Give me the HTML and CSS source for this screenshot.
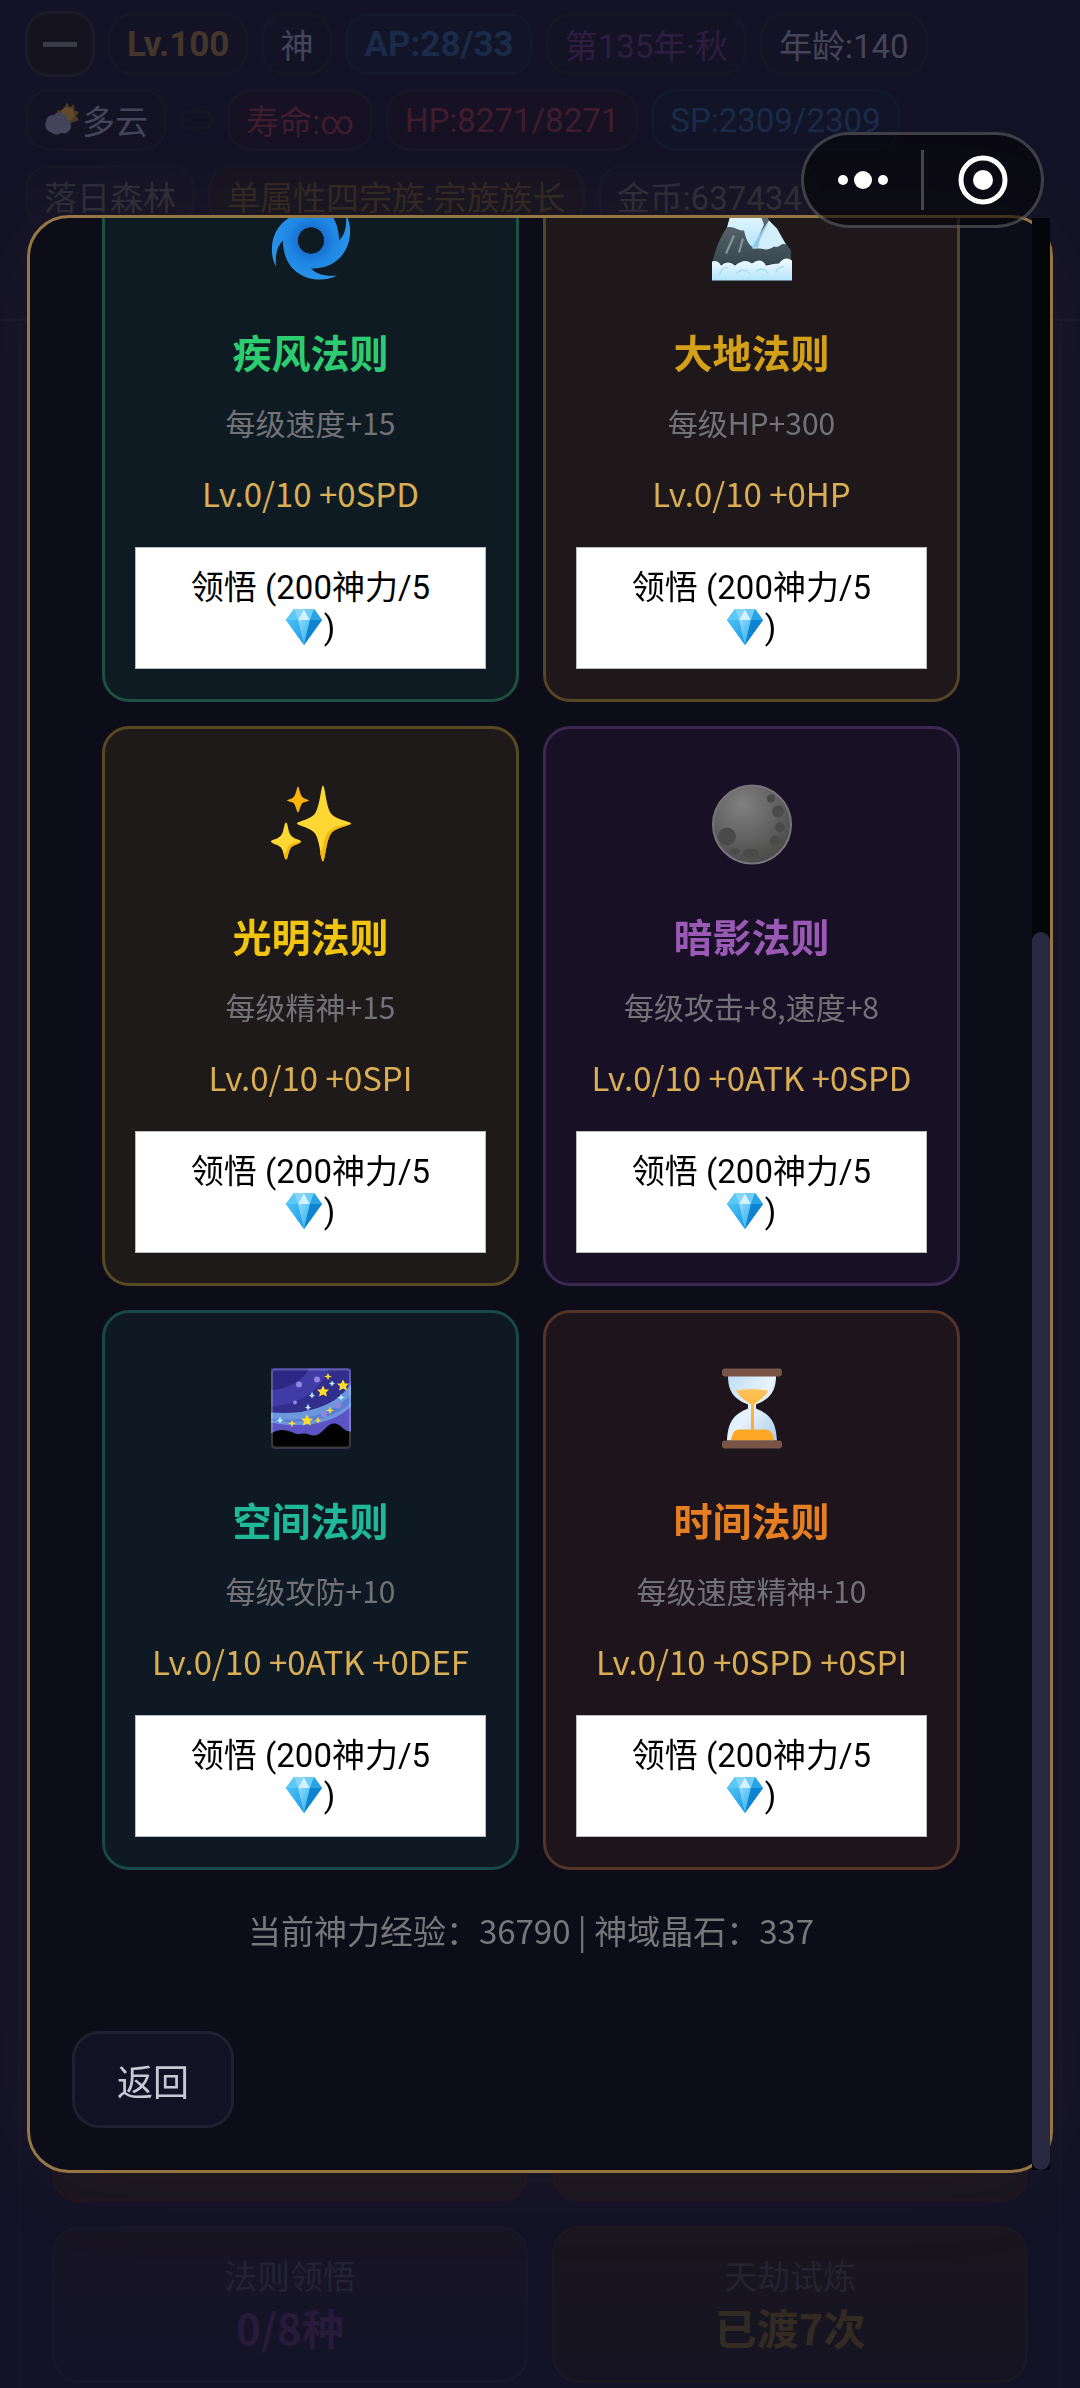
FILE: index.html
```html
<!DOCTYPE html>
<html lang="zh-CN">
<head>
<meta charset="utf-8">
<meta name="viewport" content="width=device-width, initial-scale=1">
<title>法则领悟</title>
<link rel="stylesheet" href="styles.css">
</head>
<body>
<svg class="sprite" aria-hidden="true">
  <defs>
    <linearGradient id="gem-left" x1="0" y1="0" x2="1" y2="1"><stop offset="0" stop-color="#4fc3f7"/><stop offset="1" stop-color="#1e9be6"/></linearGradient>
    <linearGradient id="gem-mid" x1="0" y1="0" x2="1" y2="1"><stop offset="0" stop-color="#8fdcfc"/><stop offset="1" stop-color="#29abed"/></linearGradient>
    <radialGradient id="wind-fill" cx="0" cy="0" r="40" gradientUnits="userSpaceOnUse"><stop offset=".3" stop-color="#1a6fd0"/><stop offset=".6" stop-color="#1e88e5"/><stop offset="1" stop-color="#2a93ea"/></radialGradient>
    <linearGradient id="rock" x1="0" y1="0" x2="0" y2="1"><stop offset="0" stop-color="#66747b"/><stop offset="1" stop-color="#37474f"/></linearGradient>
    <linearGradient id="snow" x1="0" y1="0" x2="0" y2="1"><stop offset="0" stop-color="#f4fbff"/><stop offset="1" stop-color="#b3e5fc"/></linearGradient>
    <radialGradient id="moon" cx=".38" cy=".25" r=".8"><stop offset="0" stop-color="#808080"/><stop offset=".6" stop-color="#5f5f5f"/><stop offset="1" stop-color="#484846"/></radialGradient>
    <linearGradient id="glass" x1="0" y1="0" x2="1" y2="1"><stop offset="0" stop-color="#bfdcf5"/><stop offset=".5" stop-color="#e8f3fc"/><stop offset="1" stop-color="#aaccea"/></linearGradient>
    <linearGradient id="sand" x1="0" y1="0" x2="0" y2="1"><stop offset="0" stop-color="#ffc35a"/><stop offset="1" stop-color="#ffa726"/></linearGradient>
  </defs>
  <symbol id="gem" viewBox="0 0 36 36">
    <path d="M8 0h20l8 11-18 25L0 11z" fill="#29a6e8"/>
    <path d="M8 0 0 11h12z" fill="#5cc8f5"/><path d="M8 0h10l-6 11z" fill="#85d8fa"/>
    <path d="m18 0-6 11h12z" fill="#d3f1fe"/><path d="M18 0h10l-4 11z" fill="#6dcdf7"/>
    <path d="m28 0 8 11H24z" fill="#2ba4e6"/>
    <path d="M0 11h12l6 25z" fill="url(#gem-left)"/><path d="M12 11h12l-6 25z" fill="url(#gem-mid)"/><path d="M24 11h12L18 36z" fill="#0f83cf"/>
  </symbol>
</svg>

<div class="page">
  <header class="status">
    <div class="status-row">
      <button class="chip toggle" type="button" aria-label="收起"><span class="minus"></span></button>
      <span class="chip c-gold strong">Lv.100</span>
      <span class="chip">神</span>
      <span class="chip c-blue strong">AP:28/33</span>
      <span class="chip c-purple">第135年·秋</span>
      <span class="chip">年龄:140</span>
    </div>
    <div class="status-row">
      <span class="chip"><svg class="weather" viewBox="0 0 36 36" aria-hidden="true"><path d="m24 0 2 5 5-3v6l5 2-3 4 3 4-6 2-8 4-9-9 1-7 5 0z" fill="#4e3a24"/><circle cx="24" cy="12" r="7" fill="#61492a"/><path d="M8 31a8 8 0 0 1-6-11 7 7 0 0 1 8-7 8 8 0 0 1 14 4 8 8 0 0 1 1 13q-3 3-7 1-5 4-10 0z" fill="#43445a"/></svg>多云</span>
      <span class="chip blank"></span>
      <span class="chip c-red">寿命:∞</span>
      <span class="chip c-red">HP:8271/8271</span>
      <span class="chip c-blue">SP:2309/2309</span>
    </div>
    <div class="status-row dim">
      <span class="chip">落日森林</span>
      <span class="chip c-bronze">单属性四宗族·宗族族长</span>
      <span class="chip">金币:637434</span>
    </div>
  </header>
  <main class="realm">
    <div class="tiles">
      <div class="tile t-red"></div>
      <div class="tile t-red"></div>
      <div class="tile t-law"><span>法则领悟</span><strong class="n-purple">0/8种</strong></div>
      <div class="tile t-trial"><span>天劫试炼</span><strong class="n-gold">已渡7次</strong></div>
    </div>
  </main>
</div>

<div class="overlay">
  <section class="modal" role="dialog" aria-label="法则领悟">
    <div class="scroller">
      <div class="laws">
        <article class="law wind">
          <svg class="law-icon" viewBox="0 0 80 80" aria-hidden="true"><g transform="translate(40 40)" fill="url(#wind-fill)"><path fill-rule="evenodd" d="M-28 0a28 28 0 1 0 56 0a28 28 0 1 0-56 0zM-13 0a13 13 0 1 0 26 0a13 13 0 1 0-26 0z"/><path id="arm" d="M26 35C8 45-28 38-28 0L0 28C6 34 14 36 26 35z"/><use href="#arm" transform="rotate(90)"/><use href="#arm" transform="rotate(180)"/><use href="#arm" transform="rotate(270)"/><circle r="13" fill="#0f1b22"/></g></svg>
          <h2>疾风法则</h2><p class="desc">每级速度+15</p><p class="level">Lv.0/10 +0SPD</p>
          <button class="learn" type="button">领悟 (200神力/5<br><svg class="gem"><use href="#gem"/></svg>)</button>
        </article>
        <article class="law earth">
          <svg class="law-icon" viewBox="0 0 80 80" aria-hidden="true"><path d="M0 64C3 48 9 36 14 28L34 4l14 2 16 24 15 20v14z" fill="url(#rock)"/><path d="m15 27 3-11C24 14 28 10 30 4q8-6 15 2l7 18-8 18 0 6c-8-2-10-10-12-18-4 1-12-5-17-3z" fill="url(#snow)"/><path d="m57 20 8 8 9 16c-6-2-6 4-12 2-6 4-9 3-14 2l-8 0 7-13z" fill="#d3effb"/><path d="m57 21-9 18-2 8-6 0 7-12z" fill="#8fc9e8"/><path d="m22 35-8 18M31 38l-4 14" stroke="#8a979d" stroke-width="2"/><path d="M0 61q6-2 9 4 7-6 14 0 10-8 17-2 9-7 14 2 8-2 13-2 6-8 13-3v20H0z" fill="url(#snow)"/><path d="M8 74q0-7 8-7m8 6q8-7 14 0m6-2q8-6 12 2m8-1q0-5 8-6" fill="none" stroke="#8ed4f4"/></svg>
          <h2>大地法则</h2><p class="desc">每级HP+300</p><p class="level">Lv.0/10 +0HP</p>
          <button class="learn" type="button">领悟 (200神力/5<br><svg class="gem"><use href="#gem"/></svg>)</button>
        </article>
        <article class="law light">
          <svg class="law-icon" viewBox="0 0 80 80" aria-hidden="true"><path d="M52 1c2 0 3 21 8 28 4 6 20 8 20 10s-16 4-20 10c-5 7-6 28-8 28s-3-21-8-28c-4-6-18-8-18-10s14-4 18-10c5-7 6-28 8-28z" fill="#fdd835"/><path d="M80 39c0 2-16 4-20 10-5 7-6 28-8 28-1 0-2-4-3-9 5-6 3-14 8-20 6-7 14-7 23-9z" fill="#f4b70c"/><path d="M15 38c2 0 2 10 5 13 3 4 10 4 10 6s-7 3-10 6c-3 4-3 12-5 12s-2-8-5-12c-3-3-10-4-10-6s7-2 10-6c3-3 3-13 5-13z" fill="#fdd835"/><path d="M30 57c0 2-7 3-10 6-3 4-3 12-5 12l-2-5c4-3 2-6 5-9s7-3 12-4z" fill="#f4b70c"/><path d="M27 2c1 0 2 8 4 10 2 3 7 3 7 4s-5 1-7 3c-2 3-3 9-4 9s-2-6-4-9c-2-2-7-2-7-3s5-1 7-4c2-2 3-10 4-10z" fill="#fbb40b"/></svg>
          <h2>光明法则</h2><p class="desc">每级精神+15</p><p class="level">Lv.0/10 +0SPI</p>
          <button class="learn" type="button">领悟 (200神力/5<br><svg class="gem"><use href="#gem"/></svg>)</button>
        </article>
        <article class="law shadow">
          <svg class="law-icon" viewBox="0 0 80 80" aria-hidden="true"><circle cx="40" cy="40" r="39" fill="url(#moon)" stroke="#77757a" stroke-width="2"/><g fill="#4a4a4a"><circle cx="15" cy="52" r="9"/><circle cx="59" cy="14" r="4"/><circle cx="66" cy="27" r="6"/><circle cx="68" cy="43" r="5"/><circle cx="63" cy="56" r="5"/><ellipse cx="39" cy="69" rx="8" ry="5"/><ellipse cx="23" cy="67" rx="5" ry="3"/></g></svg>
          <h2>暗影法则</h2><p class="desc">每级攻击+8,速度+8</p><p class="level">Lv.0/10 +0ATK +0SPD</p>
          <button class="learn" type="button">领悟 (200神力/5<br><svg class="gem"><use href="#gem"/></svg>)</button>
        </article>
        <article class="law space">
          <svg class="law-icon" viewBox="0 0 80 80" aria-hidden="true"><rect width="80" height="80" rx="3" fill="#5c54c4"/><path d="M0 0h80v12C68 38 38 48 0 46z" fill="#312e8d"/><path d="M0 0h58C48 24 28 36 0 38z" fill="#3f3ca6"/><path d="M0 0h38C32 12 18 20 0 22z" fill="#2a2882"/><path d="M0 44c38 3 66-8 80-28v22C62 56 28 60 0 54z" fill="#6c97dd"/><path d="M0 50c35 5 65-7 80-24v8C62 52 28 56 0 52z" fill="#5b7dd2"/><g fill="#8f86dc"><circle cx="28" cy="16" r="3"/><circle cx="46" cy="11" r="3"/><circle cx="24" cy="34" r="2"/><circle cx="67" cy="37" r="3"/><circle cx="53" cy="46" r="3"/></g><g fill="#fdde2b"><path id="star" d="m52 17 2 4 4 0-3 3 1 4-4-2-4 2 1-4-3-3 4 0z"/><use href="#star" x="20" y="-6"/><use href="#star" x="-16" y="29"/><path d="m57 4 1 3 3 1-3 1-1 3-1-3-3-1 3-1zm2 34 1 3 3 1-3 1-1 3-1-3-3-1 3-1zM21 51l1 3 3 1-3 1-1 3-1-3-3-1 3-1zm26-3 1 3 2 1-2 1-1 2-1-2-2-1 2-1z"/></g><path d="m41 23 1 3 2 1-2 1-1 2-1-2-2-1 2-1zm-4 12 1 3 2 1-2 1-1 2-1-2-2-1 2-1zm33-10 1 3 3 1-3 1-1 2-1-2-3-1 3-1zm-9-13 1 2 2 1-2 1-1 2-1-2-2-1 2-1zM9 48l1 3 3 1-3 1-1 2-1-2-3-1 3-1z" fill="#b9f0ff"/><path d="M0 65c8-5 14-4 22-1 6 4 10-1 16 2 13 5 16-12 26-11 7 1 8 8 16 8v14q0 3-3 3H3q-3 0-3-3z" fill="#020202"/><rect x="1" y="1" width="78" height="78" rx="3" fill="none" stroke="#fff" stroke-opacity=".22" stroke-width="2"/></svg>
          <h2>空间法则</h2><p class="desc">每级攻防+10</p><p class="level">Lv.0/10 +0ATK +0DEF</p>
          <button class="learn" type="button">领悟 (200神力/5<br><svg class="gem"><use href="#gem"/></svg>)</button>
        </article>
        <article class="law time">
          <svg class="law-icon" viewBox="0 0 80 80" aria-hidden="true"><path d="M16 7h48c0 15-5 23-20 29v4c15 6 20 14 21 32H15c1-18 6-26 21-32v-4C21 30 16 22 16 7z" fill="url(#glass)"/><path d="M24 22q16-3 32 0c-2 6-8 9-14 14v25h-3V36c-7-5-12-8-15-14z" fill="url(#sand)"/><path d="M19 72c1-8 4-11 8-11h26c5 0 8 3 9 11z" fill="#ffa726"/><rect x="10" width="60" height="8" rx="3" fill="#795548"/><rect x="10" y="72" width="60" height="8" rx="3" fill="#795548"/></svg>
          <h2>时间法则</h2><p class="desc">每级速度精神+10</p><p class="level">Lv.0/10 +0SPD +0SPI</p>
          <button class="learn" type="button">领悟 (200神力/5<br><svg class="gem"><use href="#gem"/></svg>)</button>
        </article>
      </div>
      <p class="balance">当前神力经验：36790 | 神域晶石：337</p>
      <button class="back" type="button">返回</button>
    </div>
    <div class="scrollbar" aria-hidden="true"><div class="thumb"></div></div>
  </section>
</div>

<div class="capsule">
  <button type="button" aria-label="更多"><svg width="52" height="20" viewBox="0 0 52 20" fill="#fff"><circle cx="6" cy="10" r="5"/><circle cx="26" cy="10" r="9"/><circle cx="46" cy="10" r="5"/></svg></button>
  <span class="divider"></span>
  <button type="button" aria-label="关闭"><svg width="50" height="50" viewBox="0 0 50 50"><circle cx="25" cy="25" r="22" fill="none" stroke="#fff" stroke-width="5"/><circle cx="25" cy="25" r="10" fill="#fff"/></svg></button>
</div>
</body>
</html>
```
FILE: styles.css
```css
* { box-sizing: border-box; }

body {
  margin: 0;
  background: #131226;
  color: #45455a;
  font-family: "Noto Sans CJK SC", "Noto Sans", sans-serif;
  font-size: 33px;
}

button { font: inherit; color: inherit; cursor: pointer; }
h2, p { margin: 0; }
.sprite { position: absolute; width: 0; height: 0; }

/* Page behind the dialog */
.page {
  display: flex;
  flex-direction: column;
  height: 100vh;
  overflow: hidden;
}

.status {
  display: flex;
  flex-direction: column;
  gap: 12px;
  min-height: 321px;
  padding: 12px 25px 0;
  border-bottom: 2px solid #1a1828;
  font-family: Roboto, "Noto Sans CJK SC", sans-serif;
}

.status-row {
  display: flex;
  align-items: center;
  gap: 13px;
  height: 64px;
}

.chip {
  display: flex;
  align-items: center;
  height: 62px;
  padding: 0 16px;
  border: 3px solid #171627;
  border-radius: 24px;
  background: #141325;
  white-space: nowrap;
}

.toggle {
  justify-content: center;
  width: 70px;
  height: 66px;
  padding: 0;
  border-color: #1c1a27;
  background: #151320;
}

.minus { width: 34px; height: 5px; background: #3b3a48; }
.blank { width: 34px; height: 20px; padding: 0; border-radius: 10px; }
.strong { font-size: 35px; font-weight: 700; }
.dim { color: #2c2b38; }
.c-gold { color: #45362c; }
.c-blue { color: #1a2b49; background: #121428; border-color: #14182c; }
.c-purple { color: #2f1d40; }
.c-red { color: #401c2e; background: #161223; }
.c-bronze { color: #2f2722; background: #161321; }
.weather { width: 35px; height: 46px; margin-right: 3px; }

.realm {
  display: flex;
  flex: 1;
  flex-direction: column;
  justify-content: flex-end;
  margin: 0 18px;
  padding: 0 31px 5px;
  border: solid #151528;
  border-width: 0 3px;
}

.tiles {
  display: grid;
  grid-template-columns: 1fr 1fr;
  gap: 24px;
}

.tile {
  display: flex;
  flex-direction: column;
  align-items: center;
  height: 157px;
  padding-top: 21px;
  border: 3px solid #181729;
  border-radius: 27px;
  line-height: 50px;
  color: #242331;
}

.tile strong { font-size: 42px; line-height: 54px; }
.t-red { background: #19141e; border-color: #1e1420; }
.t-law { background: linear-gradient(#181524, #131328); }
.t-trial { background: linear-gradient(#19161f, #161423); border-color: #1b1822; }
.n-purple { color: #281a3a; }
.n-gold { color: #332b22; }

/* Dialog */
.overlay {
  position: fixed;
  inset: 0;
  display: flex;
  align-items: center;
  justify-content: center;
}

.modal {
  position: relative;
  width: 95%;
  height: 82vh;
  border: 3px solid #957743;
  border-radius: 42px;
  background: #0d0c19;
  box-shadow: 0 0 120px rgba(212, 160, 60, .06);
}

.scroller {
  display: flex;
  flex-direction: column;
  justify-content: flex-end;
  align-items: flex-start;
  height: 100%;
  margin-right: 18px;
  padding: 0 42px 42px;
  overflow: hidden;
}

.scrollbar {
  position: absolute;
  top: 0;
  right: 0;
  bottom: 0;
  display: flex;
  align-items: flex-end;
  width: 18px;
  background: #05060a;
}

.thumb {
  width: 100%;
  height: 63.4%;
  border-radius: 9px;
  background: #282840;
}

.laws {
  display: grid;
  flex-shrink: 0;
  grid-template-columns: 1fr 1fr;
  gap: 24px;
  width: 100%;
  padding: 0 30px;
}

.law {
  display: flex;
  flex-direction: column;
  gap: 15px;
  align-items: center;
  padding: 30px;
  border: 3px solid;
  border-radius: 27px;
  text-align: center;
}

.law-icon { width: 80px; height: 131px; }
.law h2 { font-size: 39px; line-height: 60px; }
.desc { color: #727278; font-size: 30px; line-height: 52px; }
.level { color: #d9ae54; line-height: 60px; white-space: nowrap; }

.wind { background: #0f1b22; border-color: #1d5040; }
.wind h2 { color: #2ecc71; }
.earth { background: #1e181b; border-color: #554522; }
.earth h2 { color: #d4a017; }
.light { background: #1f1a1a; border-color: #574a23; }
.light h2 { color: #f1c40f; }
.shadow { background: #181126; border-color: #3b2952; }
.shadow h2 { color: #9b59b6; }
.space { background: #0e1924; border-color: #184948; }
.space h2 { color: #1fb898; }
.time { background: #1d151b; border-color: #533426; }
.time h2 { color: #e67e22; }

.learn {
  width: 100%;
  margin-top: 9px;
  padding: 20px 30px;
  border: 1px solid #b9bcbd;
  background: #fff;
  color: #000;
  font-family: Roboto, "Noto Sans CJK SC", sans-serif;
  line-height: 40px;
}

.gem { width: 36px; height: 36px; margin-right: 2px; vertical-align: -6px; }

.balance {
  align-self: center;
  margin-top: 35px;
  color: #77777c;
  line-height: 50px;
}

.back {
  width: 162px;
  height: 97px;
  flex-shrink: 0;
  margin-top: 76px;
  padding: 0;
  border: 3px solid #202033;
  border-radius: 27px;
  background: #111224;
  color: #c9c9d6;
  font-size: 36px;
}

/* Floating mini-app capsule */
.capsule {
  position: fixed;
  top: 132px;
  right: 36px;
  display: flex;
  align-items: center;
  width: 243px;
  height: 96px;
  border: 3px solid rgba(200, 200, 210, .28);
  border-radius: 48px;
  background: rgba(5, 5, 8, .6);
}

.capsule button {
  display: flex;
  flex: 1;
  align-items: center;
  justify-content: center;
  padding: 0;
  border: 0;
  background: none;
}

.divider { width: 3px; height: 60px; background: #45454c; }
```
